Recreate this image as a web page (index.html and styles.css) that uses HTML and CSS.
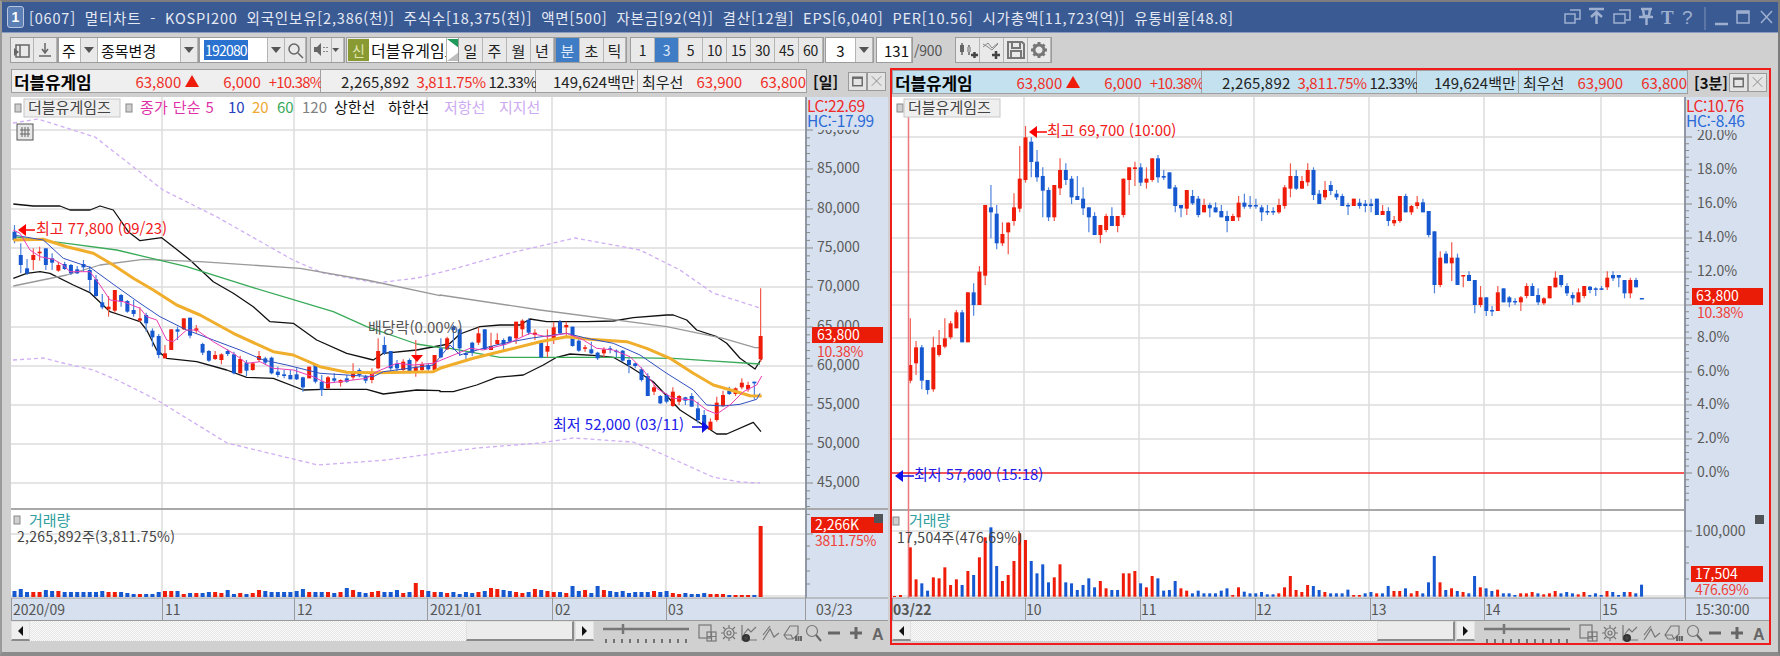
FILE: index.html
```html
<!DOCTYPE html>
<html lang="ko">
<head>
<meta charset="utf-8">
<title>멀티차트</title>
<link rel="stylesheet" href="styles.css">
</head>
<body>
<svg class="sprite" width="0" height="0">
  <symbol id="tools" viewBox="0 0 285 24">
    <g class="t-line"><path d="M0 8H86" class="t-bar"/><path d="M20 3V13" class="t-thumb"/>
      <path d="M3 18v4M11 18v4M19 18v4M27 18v4M35 18v4M43 18v4M51 18v4M59 18v4M67 18v4M75 18v4M83 18v4" class="t-tick"/></g>
    <g class="t-ico">
      <rect x="96" y="4" width="12" height="13"/><rect x="104" y="11" width="9" height="9"/><path d="M104 15.500h9M108.500 11v9"/>
      <circle cx="126" cy="12" r="5"/><circle cx="126" cy="12" r="2"/><path d="M126 4v3M126 17v3M118 12h3M131 12h3M120 6l2 2M130 16l2 2M132 6l-2 2M122 16l-2 2"/>
      <path d="M139 4v15h15M141 13l4-5 3 3 5-5"/><circle cx="143" cy="17" r="3" class="t-dark"/>
      <path d="M160 19l7-11 4 8 5-4"/><path d="M160 14l7-9"/>
      <path d="M181 14l6-9h8v8l-5 5h-6z M181 14h7l2 4"/><path d="M193 15v5M195.500 15v5M198 15v5" class="t-bold"/>
      <circle cx="209" cy="10" r="5.500"/><path d="M213 14l5 6" class="t-bold"/>
      <path d="M225 12h12M247 12h12M253 6v12" class="t-heavy"/>
    </g>
  </symbol>
  <symbol id="win-max" viewBox="0 0 18 18"><rect x="4" y="5" width="10" height="9" class="btn-ico"/><path d="M4 6h10" class="btn-ico"/></symbol>
  <symbol id="win-x" viewBox="0 0 18 18"><path d="M4 4l10 10M14 4L4 14" class="btn-ico btn-thin"/></symbol>
  <symbol id="caret" viewBox="0 0 16 24"><path d="M3 9h10l-5 6z" class="caret"/></symbol>
</svg>

<div class="window">
  <header class="titlebar">
    <span class="badge">1</span>
    <span class="title">[0607] 멀티차트 - KOSPI200 외국인보유[2,386(천)] 주식수[18,375(천)] 액면[500] 자본금[92(억)] 결산[12월] EPS[6,040] PER[10.56] 시가총액[11,723(억)] 유통비율[48.8]</span>
    <svg class="wm" width="212" height="30" viewBox="0 0 212 30">
      <g class="wm-line">
        <path d="M6 8h10v9h-5M1 12h10v9H1z"/>
        <path d="M25 7h15M32.500 22V12M27 15l5.500-5 5.500 5" class="wm-heavy"/>
        <path d="M55 8h11v10h-4M50 12h11v9H50z"/>
        <path d="M77 7h11M79 7l1 7h5l1-7M75 15h14M82.500 15v8" class="wm-heavy"/>
        <path d="M141 5v23" class="wm-sep"/>
        <path d="M151 22h13" class="wm-heavy"/>
        <rect x="173" y="9" width="12" height="12"/><path d="M173 10.500h12" class="wm-heavy"/>
        <path d="M197 9l11 12M208 9L197 21"/>
      </g>
      <text x="97" y="22" class="wm-t">T</text>
      <text x="118" y="22" class="wm-q">?</text>
    </svg>
  </header>

  <nav class="toolbar">
    <div class="tgroup">
      <button class="tb w-23"><svg width="20" height="20" viewBox="0 0 20 20"><path d="M4 5h13v12H4zM8 5v12" class="ti"/><path d="M2 8l5 4-5 4z" class="ti-fill"/></svg></button>
      <button class="tb w-23"><svg width="20" height="20" viewBox="0 0 20 20"><path d="M10 3v9M7 9l3 4 3-4M4 16h12" class="ti"/></svg></button>
    </div>
    <div class="tgroup gl-2">
      <span class="field w-22">주</span>
      <button class="tb w-17"><svg width="16" height="24"><use href="#caret"/></svg></button>
      <span class="field w-83">종목변경</span>
      <button class="tb w-17"><svg width="16" height="24"><use href="#caret"/></svg></button>
    </div>
    <div class="tgroup gl-2">
      <span class="field w-68"><b class="sel">192080</b></span>
      <button class="tb w-17"><svg width="16" height="24"><use href="#caret"/></svg></button>
      <button class="tb w-21"><svg width="18" height="18" viewBox="0 0 18 18"><circle cx="8" cy="8" r="5" class="ti"/><path d="M12 12l5 5" class="ti"/></svg></button>
    </div>
    <div class="tgroup gl-5">
      <button class="tb w-21"><svg width="18" height="18" viewBox="0 0 18 18"><path d="M2 6h3l4-4v13l-4-4H2z" class="ti-fill"/><path d="M12 6v1M15 6v1M12 10v1M15 10v1" class="ti"/></svg></button>
      <button class="tb w-12"><svg width="12" height="24" viewBox="2 0 12 24"><use href="#caret"/></svg></button>
    </div>
    <div class="tgroup gl-3">
      <span class="shin">신</span>
      <span class="field w-78 name-in">더블유게임즈</span>
      <svg class="spin" width="12" height="24" viewBox="0 0 12 24"><path d="M0 1h12v9z" class="spin-up"/><path d="M12 14v9H0z" class="spin-dn"/></svg>
    </div>
    <div class="tgroup">
      <button class="tb w-24">일</button><button class="tb w-24">주</button><button class="tb w-24">월</button><button class="tb w-23">년</button>
    </div>
    <div class="tgroup gl-2">
      <button class="tb w-24 on">분</button><button class="tb w-24">초</button><button class="tb w-22">틱</button>
    </div>
    <div class="tgroup gl-5 num">
      <button class="tb w-24">1</button><button class="tb w-24 on">3</button><button class="tb w-24">5</button><button class="tb w-24">10</button><button class="tb w-24">15</button><button class="tb w-24">30</button><button class="tb w-24">45</button><button class="tb w-24">60</button>
    </div>
    <div class="tgroup gl-3 num">
      <span class="field w-30 centered">3</span>
      <button class="tb w-17"><svg width="16" height="24"><use href="#caret"/></svg></button>
    </div>
    <div class="tgroup gl-4 num">
      <span class="field w-35 right">131</span>
    </div>
    <span class="of900">/900</span>
    <div class="tgroup gl-14">
      <button class="tb w-24"><svg width="22" height="20" viewBox="0 0 22 20"><path d="M5 3v12M12 5v10" class="ti"/><rect x="3" y="5" width="4" height="7" class="ti-fill"/><rect x="10" y="7" width="4" height="5" class="ti-gray"/><path d="M14 15h7M17.500 12v6" class="ti-heavy"/></svg></button>
      <button class="tb w-24"><svg width="22" height="20" viewBox="0 0 22 20"><path d="M2 7l5-4 4 5 6-5M2 4l5 3 4 3 6-6" class="ti-thin"/><path d="M11 15h8M15 11v8" class="ti-heavy"/></svg></button>
      <button class="tb w-24"><svg width="20" height="20" viewBox="0 0 20 20"><path d="M2 2h14l2 2v14H2zM6 2v6h8V2M5 18v-7h10v7" class="ti-bold"/></svg></button>
      <button class="tb w-23"><svg width="20" height="20" viewBox="0 0 20 20"><circle cx="10" cy="10" r="5" class="ti-gear"/><path d="M10 2v4M10 14v4M2 10h4M14 10h4M4.500 4.500l3 3M12.500 12.500l3 3M15.500 4.500l-3 3M7.500 12.500l-3 3" class="ti-gear"/></svg></button>
    </div>
  </nav>

  <main class="panes">
    <section class="pane">
      <div class="head">
        <div class="seg s1"><span class="nm">더블유게임</span><span class="rd p1">63,800</span><i class="upa"></i><span class="rd p2">6,000</span><span class="rd p3">+10.38%</span></div>
        <div class="seg s2"><span class="v1">2,265,892</span><span class="rd v2">3,811.75%</span><span class="v3">12.33%</span></div>
        <div class="seg s3"><span>149,624백만</span></div>
        <div class="seg s4"><span class="q0">최우선</span><span class="rd q1">63,900</span><span class="rd q2">63,800</span></div>
        <b class="tag">[일]</b>
        <button class="hb"><svg width="18" height="18"><use href="#win-max"/></svg></button>
        <button class="hb"><svg width="18" height="18"><use href="#win-x"/></svg></button>
      </div>
      <svg class="chart" id="leftChart" viewBox="11 95 877 526" width="877" height="526">
        <rect x="11" y="97" width="795" height="501" class="plotbg"/>
        <rect x="806" y="97" width="82" height="501" class="axbg"/>
        <g id="lPlot"></g>
        <g class="axt">
          <text x="817" y="134">90,000</text><text x="817" y="173">85,000</text><text x="817" y="213">80,000</text><text x="817" y="252">75,000</text><text x="817" y="291">70,000</text><text x="817" y="331">65,000</text><text x="817" y="370">60,000</text><text x="817" y="409">55,000</text><text x="817" y="448">50,000</text><text x="817" y="487">45,000</text>
        </g>
        <rect x="807" y="97" width="81" height="33" class="axbg"/>
        <text x="807" y="112" class="lc">LC:22.69</text><text x="807" y="127" class="hc">HC:-17.99</text>
        <rect x="812" y="327" width="71" height="16" class="pricebox"/>
        <text x="817" y="340" class="pricet">63,800</text><text x="817" y="357" class="pricep">10.38%</text>
        <rect x="811" y="517" width="72" height="16" class="pricebox"/>
        <text x="815" y="530" class="pricet">2,266K</text><text x="815" y="546" class="pricep">3811.75%</text>
        <rect x="874" y="514" width="9" height="9" class="miniico"/>
        <g class="legend">
          <rect x="15" y="104" width="6" height="8" class="lgdot"/><rect x="24" y="99" width="96" height="18" class="lgbox"/><text x="28" y="113" class="lgname">더블유게임즈</text>
          <rect x="126" y="104" width="6" height="8" class="lgdot"/>
          <text x="140" y="113" class="c-pink">종가 단순 5</text><text x="228" y="113" class="c-blue">10</text><text x="252" y="113" class="c-or">20</text><text x="277" y="113" class="c-gr">60</text><text x="302" y="113" class="c-gy">120</text><text x="334" y="113" class="c-bk">상한선</text><text x="388" y="113" class="c-bk">하한선</text><text x="444" y="113" class="c-vi">저항선</text><text x="499" y="113" class="c-vi">지지선</text>
        </g>
        <rect x="17" y="124" width="16" height="16" class="gridico"/><path d="M20 130h10M20 134h10M22 127v10M25 127v10M28 127v10" class="gridlines"/>
        <text x="36" y="234" class="an-red">최고 77,800 (09/23)</text>
        <path d="M25 230h10" class="ar-red"/><path d="M18 230l8-6v12z" class="ar-red-f"/>
        <text x="368" y="333" class="an-gray">배당락(0.00%)</text>
        <path d="M411 355h12l-6 7z" class="ar-red-f"/>
        <text x="553" y="430" class="an-blue">최저 52,000 (03/11)</text>
        <path d="M692 427h12" class="ar-blue"/><path d="M709 427l-7-6v12z" class="ar-blue-f"/>
        <rect x="14" y="516" width="6" height="8" class="lgdot"/><text x="29" y="526" class="vol-t">거래량</text>
        <text x="17" y="542" class="vol-s">2,265,892주(3,811.75%)</text>
        <g id="lAxis"></g>
        <g class="xl"><text x="13" y="615">2020/09</text><text x="165" y="615">11</text><text x="297" y="615">12</text><text x="430" y="615">2021/01</text><text x="555" y="615">02</text><text x="668" y="615">03</text><text x="816" y="615">03/23</text></g>
      </svg>
      <div class="sbar">
        <span class="sb-btn"><i class="la"></i></span><span class="sb-track"></span><span class="sb-thumb t-left"></span><span class="sb-btn"><i class="ra"></i></span>
        <svg class="tools" width="285" height="24" viewBox="0 0 285 24"><use href="#tools"/><text x="269" y="19" class="t-a">A</text></svg>
      </div>
    </section>

    <section class="pane active">
      <div class="head">
        <div class="seg s1"><span class="nm">더블유게임</span><span class="rd p1">63,800</span><i class="upa"></i><span class="rd p2">6,000</span><span class="rd p3">+10.38%</span></div>
        <div class="seg s2"><span class="v1">2,265,892</span><span class="rd v2">3,811.75%</span><span class="v3">12.33%</span></div>
        <div class="seg s3"><span>149,624백만</span></div>
        <div class="seg s4"><span class="q0">최우선</span><span class="rd q1">63,900</span><span class="rd q2">63,800</span></div>
        <b class="tag">[3분]</b>
        <button class="hb"><svg width="18" height="18"><use href="#win-max"/></svg></button>
        <button class="hb"><svg width="18" height="18"><use href="#win-x"/></svg></button>
      </div>
      <svg class="chart" id="rightChart" viewBox="892 95 877 526" width="877" height="526">
        <rect x="892" y="97" width="793" height="501" class="plotbg"/>
        <rect x="1685" y="97" width="84" height="501" class="axbg"/>
        <g id="rPlot"></g>
        <g class="axt">
          <text x="1697" y="140">20.0%</text><text x="1697" y="174">18.0%</text><text x="1697" y="208">16.0%</text><text x="1697" y="242">14.0%</text><text x="1697" y="276">12.0%</text><text x="1697" y="342">8.0%</text><text x="1697" y="376">6.0%</text><text x="1697" y="409">4.0%</text><text x="1697" y="443">2.0%</text><text x="1697" y="477">0.0%</text>
          <text x="1695" y="536">100,000</text>
        </g>
        <rect x="1686" y="97" width="83" height="33" class="axbg"/>
        <text x="1686" y="112" class="lc">LC:10.76</text><text x="1686" y="127" class="hc">HC:-8.46</text>
        <rect x="1692" y="288" width="71" height="17" class="pricebox"/>
        <text x="1696" y="301" class="pricet">63,800</text><text x="1697" y="318" class="pricep">10.38%</text>
        <rect x="1691" y="566" width="72" height="16" class="pricebox"/>
        <text x="1695" y="579" class="pricet">17,504</text><text x="1695" y="595" class="pricep">476.69%</text>
        <rect x="1755" y="515" width="9" height="9" class="miniico"/>
        <path d="M908.500 117V598" class="markv"/>
        <path d="M892 473H1685" class="markh"/>
        <g class="legend">
          <rect x="897" y="104" width="6" height="8" class="lgdot"/><rect x="904" y="99" width="96" height="18" class="lgbox"/><text x="908" y="113" class="lgname">더블유게임즈</text>
        </g>
        <text x="1047" y="136" class="an-red">최고 69,700 (10:00)</text>
        <path d="M1036 132h11" class="ar-red"/><path d="M1029 132l8-6v12z" class="ar-red-f"/>
        <text x="914" y="480" class="an-blue">최저 57,600 (15:18)</text>
        <path d="M902 476h12" class="ar-blue"/><path d="M895 476l8-6v12z" class="ar-blue-f"/>
        <rect x="893" y="517" width="6" height="8" class="lgdot"/><text x="909" y="526" class="vol-t">거래량</text>
        <text x="897" y="543" class="vol-s">17,504주(476.69%)</text>
        <g id="rAxis"></g>
        <g class="xl"><text x="893" y="615" class="xb">03/22</text><text x="1026" y="615">10</text><text x="1141" y="615">11</text><text x="1256" y="615">12</text><text x="1371" y="615">13</text><text x="1485" y="615">14</text><text x="1602" y="615">15</text><text x="1695" y="615">15:30:00</text></g>
      </svg>
      <div class="sbar">
        <span class="sb-btn"><i class="la"></i></span><span class="sb-track"></span><span class="sb-thumb t-right"></span><span class="sb-btn"><i class="ra"></i></span>
        <svg class="tools" width="285" height="24" viewBox="0 0 285 24"><use href="#tools"/><text x="269" y="19" class="t-a">A</text></svg>
      </div>
    </section>
  </main>
</div>
<script src="chart.js"></script>
</body>
</html>
```
FILE: styles.css
```css
* { box-sizing: border-box; }
html, body { margin: 0; padding: 0; }
body {
  width: 1780px; height: 656px; overflow: hidden;
  font-family: "Noto Sans CJK KR", "Noto Sans", sans-serif;
  font-size: 15px; color: #222;
}
.sprite { position: absolute; }
.window {
  height: 656px; background: #d0d0d0;
  border-top: 2px solid #7d7d7d; border-left: 2px solid #9a9a9a;
  border-right: 2px solid #7d7d7d; border-bottom: 4px solid #8b8b8b;
  display: flex; flex-direction: column;
}

/* title bar */
.titlebar {
  height: 31px; flex: none; background: #3a5a94;
  border-bottom: 1px solid #8a9dc0;
  display: flex; align-items: center; color: #e4e9f3;
}
.badge {
  width: 17px; height: 22px; margin-left: 5px; border: 1px solid #b9c6de; border-radius: 3px;
  background: #5c7fb6; color: #fff; font: bold 14px/20px "Liberation Sans", sans-serif; text-align: center;
}
.title { margin-left: 5px; font-size: 14.500px; letter-spacing: 0.820px; word-spacing: 4px; white-space: nowrap; flex: 1; }
.wm { flex: none; margin-right: 2px; }
.wm-line path, .wm-line rect { fill: none; stroke: #9fb0cf; stroke-width: 1.500; }
.wm-line .wm-heavy { stroke-width: 2.500; }
.wm-line .wm-sep { stroke: #7f93b8; stroke-width: 1; }
.wm-t { font: bold 19px "Liberation Serif", serif; fill: #9fb0cf; }
.wm-q { font: 19px "Liberation Sans", sans-serif; fill: #9fb0cf; }

/* tool bar */
.toolbar { height: 35px; flex: none; display: flex; align-items: flex-start; padding: 5px 0 0 9px; }
.tgroup { display: flex; height: 24px; outline: 1px solid #9c9c9c; background: #e8e8e8; }
.gl-2 { margin-left: 2px; } .gl-3 { margin-left: 3px; } .gl-4 { margin-left: 4px; } .gl-5 { margin-left: 5px; } .gl-14 { margin-left: 14px; }
.tb {
  height: 24px; padding: 0; margin: 0; border: 0; border-right: 1px solid #b5b5b5;
  background: #e9e9e9; font: 15px "Noto Sans CJK KR", sans-serif; color: #222;
  display: flex; align-items: center; justify-content: center;
}
.tb.on { background: #3f7cc6; color: #dfeaf8; }
.field {
  height: 24px; background: #fff; display: flex; align-items: center; padding-left: 3px;
  border-right: 1px solid #b5b5b5; white-space: nowrap; color: #111;
}
.field.centered { justify-content: center; padding: 0; }
.field.right { justify-content: flex-end; padding: 0 2px 0 0; }
.name-in { overflow: hidden; font-size: 16px; padding-left: 2px; }
.sel { font-weight: 400; background: #2a72d0; color: #fff; padding: 0 1px; font-size: 14px; letter-spacing: -0.800px; margin-left: 1px; }
.w-12 { width: 12px; } .w-17 { width: 17px; } .w-21 { width: 21px; } .w-22 { width: 22px; } .w-23 { width: 23px; } .w-24 { width: 24px; }
.w-30 { width: 30px; } .w-35 { width: 35px; } .w-68 { width: 68px; } .w-78 { width: 78px; } .w-83 { width: 83px; }
.num .tb { font-size: 14px; letter-spacing: -0.300px; }
.shin { width: 21px; margin: 1px 0 1px 1px; background: #8a9a33; color: #dfe6b0; text-align: center; font-size: 14px; line-height: 22px; }
.spin { flex: none; background: #fff; }
.spin-up { fill: #1f9a5a; }
.spin-dn { fill: #bdbdbd; }
.of900 { margin: 0 0 0 2px; font-size: 14px; color: #555; letter-spacing: -0.200px; line-height: 24px; }
.caret { fill: #555; }
.ti { fill: none; stroke: #666; stroke-width: 1.500; }
.ti-thin { fill: none; stroke: #888; stroke-width: 1; }
.ti-bold { fill: none; stroke: #777; stroke-width: 2; }
.ti-fill { fill: #666; }
.ti-gray { fill: #aaa; }
.ti-heavy { fill: none; stroke: #444; stroke-width: 2.500; }
.ti-gear { fill: none; stroke: #777; stroke-width: 3; }

/* panes */
.panes { display: flex; flex: 1; padding-left: 7px; align-items: flex-start; }
.pane { width: 879px; padding: 1px 0 0 2px; display: flex; flex-direction: column; }
.pane.active {
  width: 881px; margin-left: 2px; padding: 0; height: 577px;
  border: 2px solid #f01c1c; border-left-width: 2px;
}
.head { height: 24px; width: 877px; flex: none; display: flex; align-items: center; }
.seg {
  height: 24px; background: #efefef; border: 1px solid #a0a0a0; border-left-width: 0; flex: none;
  display: flex; align-items: center; white-space: nowrap; color: #222;
}
.active .seg { background: #c3e1ef; }
.s1 { width: 310px; border-left-width: 1px; padding-left: 2px; }
.s2 { width: 215px; }
.s3 { width: 102px; padding-left: 17px; }
.s4 { width: 169px; }
.nm { font-weight: 700; font-size: 17px; width: 82px; color: #000; letter-spacing: -0.150px; }
.rd { color: #f03028; }
.p1 { margin-left: 44px; width: 46px; }
.upa { width: 0; height: 0; margin-left: 4px; border-left: 7px solid transparent; border-right: 7px solid transparent; border-bottom: 12px solid #ee1c08; }
.p2 { margin-left: 24px; width: 38px; }
.p3 { margin-left: 8px; letter-spacing: -0.800px; }
.v1 { margin-left: 20px; width: 71px; letter-spacing: 0.200px; }
.v2 { margin-left: 7px; width: 66px; letter-spacing: -0.300px; }
.v3 { margin-left: 6px; letter-spacing: -0.500px; }
.q0 { margin-left: 4px; width: 44px; }
.q1 { margin-left: 12px; width: 46px; }
.q2 { margin-left: 18px; }
.tag { margin-left: 6px; width: 32px; font-size: 15px; color: #111; white-space: nowrap; }
.hb {
  width: 19px; height: 19px; padding: 0; margin: 0; border: 1px solid #9a9a9a; background: #e4e4e4;
  display: flex; align-items: center; justify-content: center;
}
.tag + .hb { margin-left: 3px; }
.btn-ico { fill: none; stroke: #666; stroke-width: 1.500; }
.btn-thin { stroke: #888; stroke-width: 1; }
.chart { display: block; flex: none; margin-top: 2px; }
.active .chart { margin-top: 1px; }

.plotbg { fill: #fff; }
.axbg { fill: #d6e0ee; }
.axt text { font-size: 14px; fill: #5a5a5a; }
.lc { font-size: 15.500px; fill: #ef2a2a; letter-spacing: -0.400px; }
.hc { font-size: 15.500px; fill: #2a6ad8; letter-spacing: -0.300px; }
.pricebox { fill: #ea1c08; }
.pricet { font-size: 14px; fill: #fff; }
.pricep { font-size: 14px; fill: #f0403a; letter-spacing: -0.300px; }
.miniico { fill: #505458; }
.legend text { font-size: 15px; }
.lgdot { fill: #cfcfcf; stroke: #888; }
.lgbox { fill: #efefef; stroke: #c8c8c8; }
.lgname { fill: #444; }
.c-pink { fill: #e030a8; letter-spacing: 0.300px; } .c-blue { fill: #2440c0; } .c-or { fill: #f0a830; } .c-gr { fill: #3aaa5a; } .c-gy { fill: #808080; } .c-bk { fill: #111; } .c-vi { fill: #cdaaf2; }
.gridico { fill: #e8e8e8; stroke: #555; }
.gridlines { fill: none; stroke: #666; }
.an-red { font-size: 15px; fill: #f02020; }
.an-blue { font-size: 15px; fill: #2020e8; }
.an-gray { font-size: 15px; fill: #555; }
.ar-red { fill: none; stroke: #f00; stroke-width: 1.500; }
.ar-red-f { fill: #f00; }
.ar-blue { fill: none; stroke: #1010e8; stroke-width: 1.500; }
.ar-blue-f { fill: #1010e8; }
.vol-t { font-size: 15px; fill: #2fa0a0; }
.vol-s { font-size: 14px; fill: #444; letter-spacing: 0.300px; }
.xl text { font-size: 14px; fill: #555; }
.xl .xb { font-weight: 700; }
.markv { fill: none; stroke: #ea7a80; stroke-width: 1.500; }
.markh { fill: none; stroke: #f02020; stroke-width: 1.500; }

/* chart shapes drawn by chart.js */
.grid { stroke: #dcdcdc; stroke-width: 1.500; fill: none; }
.divider { stroke: #a8a8a8; stroke-width: 2; fill: none; }
.axisline { stroke: #8f98a4; stroke-width: 2; fill: none; }
.tick { stroke: #8a8a8a; stroke-width: 1; fill: none; }
.xsep { stroke: #9a9a9a; stroke-width: 1; fill: none; }
.cu { fill: #ee1c08; } .cd { fill: #1558d0; }
.wu { stroke: #f2584a; stroke-width: 1.200; fill: none; } .wd { stroke: #4d82dc; stroke-width: 1.200; fill: none; }
.ln { fill: none; stroke-linejoin: round; }
.bbu { stroke: #111; stroke-width: 1.300; }
.ma5 { stroke: #ea3cb4; stroke-width: 1; }
.ma10 { stroke: #3050c0; stroke-width: 1; }
.ma20 { stroke: #f0ae2c; stroke-width: 3; }
.ma60 { stroke: #38aa58; stroke-width: 1.300; }
.ma120 { stroke: #999; stroke-width: 1.300; }
.env { stroke: #cfaef4; stroke-width: 1.300; stroke-dasharray: 4 3; }

/* scroll bar */
.sbar { height: 22px; width: 877px; flex: none; display: flex; align-items: flex-start; }
.sb-btn {
  width: 19px; height: 20px; flex: none; background: #efefef; border: 1px solid #e0e0e0;
  border-bottom: 2px solid #8a8a8a; display: flex; align-items: center; justify-content: center;
}
.sb-track { flex: 1; height: 20px; background: repeating-conic-gradient(#fafafa 0 25%, #e6e6e6 0 50%) 0 0 / 2px 2px; }
.sb-thumb { height: 20px; flex: none; background: #ececec; border: 1px solid #e0e0e0; border-bottom: 2px solid #8a8a8a; border-right: 2px solid #8a8a8a; margin-right: 1px; }
.t-left { width: 108px; }
.t-right { width: 78px; }
.la { width: 0; height: 0; border-top: 5px solid transparent; border-bottom: 5px solid transparent; border-right: 5px solid #111; }
.ra { width: 0; height: 0; border-top: 5px solid transparent; border-bottom: 5px solid transparent; border-left: 5px solid #111; }
.tools { flex: none; margin-left: 9px; }
.t-bar { stroke: #777; stroke-width: 2.500; fill: none; }
.t-thumb { stroke: #777; stroke-width: 2.500; fill: none; }
.t-tick { stroke: #555; stroke-width: 1.500; fill: none; }
.t-ico path, .t-ico rect, .t-ico circle { fill: none; stroke: #777; stroke-width: 1.200; }
.t-ico .t-dark { fill: #444; stroke: #333; stroke-width: 2; }
.t-ico .t-bold { stroke: #666; stroke-width: 2; }
.t-ico .t-heavy { stroke: #666; stroke-width: 3; }
.t-a { font: bold 16px "Liberation Sans", sans-serif; fill: #666; }
```
FILE: chart.js
```js
var NS = 'http://www.w3.org/2000/svg';
function el(parent, name, attrs) {
  var e = document.createElementNS(NS, name);
  for (var k in attrs) e.setAttribute(k, attrs[k]);
  parent.appendChild(e);
  return e;
}
function hline(g, x1, x2, y, cls) { el(g, 'path', { d: 'M' + x1 + ' ' + y + 'H' + x2, 'class': cls }); }
function vline(g, x, y1, y2, cls) { el(g, 'path', { d: 'M' + x + ' ' + y1 + 'V' + y2, 'class': cls }); }
function parse(str) {
  return str.trim().split(/\s+/).map(function (s) {
    var a = s.slice(1).split(',').map(Number);
    return { up: s[0] === 'r', hi: a[0], top: a[1], bot: a[2], lo: a[3] };
  });
}
function drawCandle(g, c, x, off, w) {
  vline(g, x, off + c.hi / 3, off + c.lo / 3, c.up ? 'wu' : 'wd');
  var t = off + c.top / 3, h = Math.max((c.bot - c.top) / 3, 1.5);
  el(g, 'rect', { x: x - w / 2, y: t, width: w, height: h, 'class': c.up ? 'cu' : 'cd' });
}
function poly(g, pts, cls) {
  el(g, 'polyline', { points: pts.map(function (p) { return p[0].toFixed(1) + ',' + p[1].toFixed(1); }).join(' '), 'class': 'ln ' + cls });
}
function z6(a) { var o = []; for (var i = 0; i < a.length; i += 2) o.push([a[i] / 3, 190 + a[i + 1] / 3]); return o; }
function z7(a) { var o = []; for (var i = 0; i < a.length; i += 2) o.push([440 + a[i] / 3, 270 + a[i + 1] / 3]); return o; }

/* ---------- left chart: daily ---------- */
var L6 = parse('b105,125,150,160 b160,195,225,250 b207,235,250,255 r175,195,210,240 r170,185,190,212 b175,175,225,240 b190,205,218,240 r215,225,242,245 b215,222,237,240 b222,225,250,255 b228,238,250,252 b210,222,232,245 b228,240,270,305 b255,268,318,320 b312,337,352,358 r318,350,358,380 r300,300,362,368 b312,315,335,350 b330,333,365,368 b330,360,372,380 r352,385,392,395 b368,375,400,425 b415,422,442,470 b432,438,495,505 r465,490,505,505 r418,418,480,480 b410,418,425,450 r385,385,418,420 b383,383,437,445 r405,415,422,428 b458,462,488,495 b480,483,512,515 r483,495,507,510 r490,493,510,523 b478,483,492,498 b485,493,550,553 r497,507,550,550 b510,518,542,558 r518,520,540,542 r483,498,510,515 b500,505,518,525 b500,503,550,553 b530,545,555,562 b540,553,558,565 b540,555,568,568 b535,553,568,570 b560,562,592,605 r530,530,565,565 b525,525,575,580 b555,575,600,618 r558,562,595,598 b550,565,572,578 r568,570,578,590 b555,565,575,578 r520,548,562,570 b535,540,555,562 b555,560,572,580 r535,548,570,580 r445,483,535,538 b440,465,490,495 b483,483,535,540 b510,522,535,550 r508,515,540,548 b505,510,545,550 r450,530,548,560 r515,522,540,545 b520,525,538,542 r495,495,540,545');
var L7 = parse('b205,235,262,265 r200,205,238,240 b165,170,180,240 b175,178,235,258 b245,250,255,270 b215,218,248,258 r172,190,218,225 b178,178,238,240 r188,228,240,240 r190,210,222,225 b205,210,225,240 b198,200,215,220 r155,155,205,222 r148,152,178,200 b145,150,188,195 r178,188,195,210 b215,218,262,265 r178,228,245,262 r155,172,210,222 b150,155,190,195 r155,165,172,200 b170,170,228,230 b205,212,242,245 r225,232,235,245 b215,238,250,252 b245,248,265,270 r232,238,250,262 b228,235,240,250 b238,242,245,262 b240,242,272,275 b265,270,285,310 b278,280,288,295 b292,298,330,335 b310,318,378,378 r345,352,365,375 b375,378,400,402 b370,375,395,400 r352,365,408,410 r375,378,395,405 b380,382,392,405 b370,378,410,410 b395,415,450,460 b420,435,465,470 r445,455,480,480 r380,398,450,455 r362,375,408,410 b350,362,372,375 r352,355,372,378 r325,338,352,358 r335,345,358,365 b335,335,340,388 r55,198,268,275');
var LVOL = [6,8,5,5,5,7,6,6,5,5,5,5,5,5,6,5,5,5,4,3,3,3,3,5,6,6,6,3,4,4,4,5,5,4,7,3,4,3,4,7,6,5,5,5,5,6,8,5,5,5,5,4,5,9,7,5,4,5,6,5,5,7,4,5,14,7,6,5,5,4,5,3,5,4,5,6,9,8,7,6,5,4,5,8,7,6,5,5,4,11,6,7,4,11,7,6,5,6,4,5,5,5,6,5,5,7,6,4,6,4,3,2,3,4,5,4,3,4,3,71];
/* the last bars of the strip run low and flat */
for (var n = 104; n < 119; n++) LVOL[n] = [6, 4, 3, 4, 3, 3, 4, 3, 3, 3, 2, 2, 2, 2, 2][n - 104];

(function () {
  var g = document.getElementById('lPlot');
  var ys = [130, 169, 209, 248, 287, 327, 366, 405, 444, 483];
  ys.forEach(function (y) { hline(g, 11, 806, y, 'grid'); });
  hline(g, 11, 806, 534, 'grid');
  hline(g, 11, 806, 596, 'grid');
  [162, 294, 427, 552, 666].forEach(function (x) { vline(g, x, 97, 598, 'grid'); });

  poly(g, z6([40,42,100,48,180,48,210,60,270,60,300,48,340,60,385,125,420,152,485,143,520,170,570,210,640,275,700,310,760,350,810,395,880,400,950,450,1040,490,1120,510,1150,490,1250,480,1330,465,1350,460]).concat(z7([60,192,120,170,180,165,240,165,270,147,320,155,440,155,520,153,580,143,680,135,700,135,740,150,770,180,830,200,860,220,900,265,945,297,965,265])), 'bbu');
  poly(g, z6([40,265,80,250,120,245,150,250,220,285,270,308,330,365,370,378,420,395,440,420,470,480,500,505,590,515,680,540,740,562,820,565,910,600,970,598,1100,598,1150,612,1250,600,1320,602]).concat(z7([0,365,40,365,110,345,170,322,250,315,310,285,350,262,390,252,470,257,520,262,570,290,640,335,720,420,790,465,830,492,860,492,940,457,963,485])), 'bbu');
  var env1 = [[13,123],[38,119],[95,137],[163,190],[217,217],[293,260],[323,273],[377,283],[417,278],[450,270],[510,253],[575,238],[640,250],[680,270],[713,293],[760,308]];
  var env2 = [[13,360],[43,358],[63,363],[93,370],[117,380],[157,400],[227,443],[318,465],[386,460],[477,448],[540,443],[573,438],[633,442],[653,450],[713,477],[740,482],[760,483]];
  poly(g, env1, 'env');
  poly(g, env2, 'env');
  poly(g, z6([40,288,200,255,300,225,430,208,600,215,900,235,1100,270,1320,317]).concat(z7([0,75,300,120,680,170,850,205,945,233,960,233])), 'ma120');
  poly(g, z6([40,140,200,160,350,180,560,230,750,290,1000,365,1100,410,1250,462,1320,473]).concat(z7([30,235,180,262,500,262,700,265,800,272,960,282])), 'ma60');

  L6.concat(L7).forEach(function (c, i) {
    drawCandle(g, c, 14.5 + 6.27 * i, i < L6.length ? 190 : 270, 4);
  });

  poly(g, z6([40,150,130,148,200,170,280,190,340,225,400,265,460,300,530,345,600,375,700,430,820,485,880,495,960,530,1040,547,1130,548,1300,545]).concat(z7([0,295,100,265,200,240,300,215,380,200,450,208,560,215,620,235,690,265,760,310,820,345,880,362,930,377,965,378])), 'ma20');
  poly(g, z6([40,135,130,150,190,205,270,232,350,290,420,340,480,380,560,420,640,450,720,480,790,510,860,525,960,550,1120,560,1150,545,1300,525]).concat(z7([30,225,60,255,130,235,190,220,270,205,380,190,440,205,520,220,600,255,680,310,760,360,800,405,850,408,900,403,950,388,960,370])), 'ma10');
  poly(g, z6([40,120,60,130,90,180,120,200,160,208,190,225,210,245,270,245,300,285,330,330,370,335,420,355,440,380,470,390,500,450,520,455,560,420,590,420,640,455,700,490,740,520,780,515,820,535,880,540,940,560,980,580,1100,565,1130,545,1190,520,1240,525,1300,520]).concat(z7([90,235,130,240,200,222,270,190,320,200,380,190,430,210,470,235,520,240,570,260,610,300,650,355,700,385,760,390,800,420,830,432,870,405,910,365,950,345,965,318])), 'ma5');

  hline(g, 11, 888, 509, 'divider');
  var all = L6.concat(L7);
  LVOL.forEach(function (h, i) {
    el(g, 'rect', { x: 14.5 + 6.27 * i - 2, y: 597 - h, width: 4, height: h, 'class': all[i].up ? 'cu' : 'cd' });
  });

  var a = document.getElementById('lAxis');
  vline(a, 806, 97, 598, 'axisline');
  ys.forEach(function (y, i) {
    hline(a, 806, 813, y, 'tick');
    for (var k = 1; k < 5; k++) hline(a, 806, 810, y + k * 7.85, 'tick');
  });
  [534, 546, 559, 571, 584].forEach(function (y, i) { hline(a, 806, i === 0 ? 813 : 810, y, 'tick'); });
  drawX(a, 11, 888, [162, 294, 427, 552, 666, 805]);
})();

/* ---------- right chart: 3 minutes ---------- */
var R8 = parse('r625,765,812,820 r693,712,760,795 b705,712,812,838 b810,810,840,853 r680,712,838,845 r660,705,735,740 r625,685,710,715 r633,640,682,688 r600,607,655,655 b600,607,697,697 r547,547,697,697 b520,547,585,617 r468,485,585,585 r285,285,497,525 b225,292,307,385 b285,311,400,418 r337,372,400,408 r337,338,367,433 r250,292,333,347 r108,206,296,307 r48,82,210,218 b82,95,156,202 b120,155,202,215 b172,198,242,322 b232,240,322,333 r225,225,322,333 r145,180,235,255 b160,180,210,225 b198,206,262,282 b198,258,270,270 b232,266,295,315 b292,292,322,367 b307,318,375,375 r345,345,375,400 r311,318,360,367 b292,318,348,348 r318,318,348,367 r206,206,315,322 r172,172,210,255 r155,172,177,228 b160,172,218,228 r172,206,218,236 r145,145,210,215 b135,145,202,218 b180,198,203,210 b187,187,236,236 b225,232,288,307 b285,285,295,322 r240,240,296,315 b240,258,280,285 b258,266,315,322 r266,285,307,307 b278,285,295,322 b277,292,307,307 b285,303,322,322 b303,318,333,367 r311,318,333,333 r258,278,322,333 b251,278,290,296 b258,285,290,296 b266,285,288,296 b285,292,307,333 b285,303,307,315 b292,303,307,315 r266,285,307,311 r225,232,288,296 r160,198,236,262 b180,198,236,240 r198,213,236,236 r160,180,217,228 b172,180,255,270 b240,251,282,282 r213,240,262,270 b213,225,243,255 b240,251,262,270 b251,258,288,288 b278,285,288,315 r266,266,288,288 b266,278,288,296 b270,281,288,307 b266,281,288,307 b266,266,315,315 r285,303,315,315 b292,303,333,348 r318,330,340,348 r258,258,333,338 b251,258,307,307 r285,288,307,315 r258,277,288,296 b266,277,307,307 b303,303,375,382 b364,364,525,550 r424,443,525,532 b424,431,460,460 r397,443,460,513 b431,443,525,525 r495,495,498,532 b484,495,513,513 b510,510,585,610 r528,562,585,592 b562,562,603,618 b588,600,603,618 r528,547,603,603 b535,535,577,577 b558,562,577,592 b565,573,577,585 r558,562,577,603 r520,528,558,565 b520,528,558,558 b535,555,577,585 r562,565,580,585 r528,528,565,565 r484,503,532,532 b495,495,525,532 b520,528,550,558 b547,555,565,585 r535,547,577,577 r528,528,558,565 b528,530,540,550 b532,535,538,558 b528,535,538,540 r484,503,532,540 b484,495,505,513 b495,495,503,532 b510,510,550,565 r503,510,550,565 b503,510,532,532 b564,564,565,564');
var RVOL = 'r142 r238 b250 b272 r232 r235 r202 r255 r238 b255 r213 b225 r172 r112 b82 b198 r243 r225 r183 r100 r120 b183 b220 b193 b247 r232 r193 b247 b250 b270 b255 b235 b262 r243 r265 b270 b270 r220 r220 r213 b250 r262 r228 b235 b272 b270 b243 r265 r272 b280 b272 b280 b280 b280 b272 b265 r285 r262 b275 b280 b280 b276 b283 b283 r280 r262 r228 r270 r276 r255 b258 b270 r276 b280 b280 b280 b269 r285 r285 b280 b276 r280 b280 b258 r273 r273 b265 r280 r273 b280 b247 b168 r247 b270 r265 b273 r276 b280 b228 r262 b265 b273 r269 b280 b280 b285 r280 r280 r276 b280 r283 r280 r273 b280 b276 b280 r283 r276 b285 b280 b285 r273 b276 b285 b276 r276 b280 b254';

(function () {
  var g = document.getElementById('rPlot');
  var ys = [137, 170, 204, 238, 272, 305, 338, 372, 405, 439];
  ys.forEach(function (y) { hline(g, 892, 1685, y, 'grid'); });
  hline(g, 892, 1685, 531, 'grid');
  hline(g, 892, 1685, 596, 'grid');
  [1024, 1139, 1254, 1369, 1484, 1601].forEach(function (x) { vline(g, x, 97, 598, 'grid'); });
  R8.forEach(function (c, i) {
    var x = 910.3 + 5.76 * i;
    drawCandle(g, c, x, 110, 4);
  });
  hline(g, 892, 1685, 510, 'divider');
  RVOL.split(' ').forEach(function (s, i) {
    var top = Number(s.slice(1));
    var x = 880 + (52.8 + 10.03 * i) / 1.742;
    el(g, 'rect', { x: x - 1.5, y: 500 + top / 3, width: 3, height: (290 - top) / 3, 'class': s[0] === 'r' ? 'cu' : 'cd' });
  });
  el(g, 'rect', { x: 893, y: 596, width: 3, height: 1, 'class': 'cu' });
  el(g, 'rect', { x: 899, y: 595, width: 3, height: 2, 'class': 'cu' });

  var a = document.getElementById('rAxis');
  vline(a, 1685, 97, 598, 'axisline');
  ys.concat([473]).forEach(function (y) {
    hline(a, 1685, 1692, y, 'tick');
    for (var k = 1; k < 5; k++) hline(a, 1685, 1689, y + k * 6.75, 'tick');
  });
  [531, 547, 563, 579].forEach(function (y, i) { hline(a, 1685, i === 0 ? 1692 : 1689, y, 'tick'); });
  drawX(a, 892, 1769, [1025, 1140, 1255, 1370, 1484, 1600, 1685]);
})();

function drawX(a, x1, x2, seps) {
  var bar = el(a, 'rect', { x: x1, y: 598, width: x2 - x1, height: 23, 'class': 'axbg' });
  hline(a, x1, x2, 598, 'xsep');
  hline(a, x1, x2, 620.5, 'xsep');
  vline(a, x1 + 0.5, 598, 621, 'xsep');
  seps.forEach(function (x) { vline(a, x + 0.5, 598, 621, 'xsep'); });
  return bar;
}
```
